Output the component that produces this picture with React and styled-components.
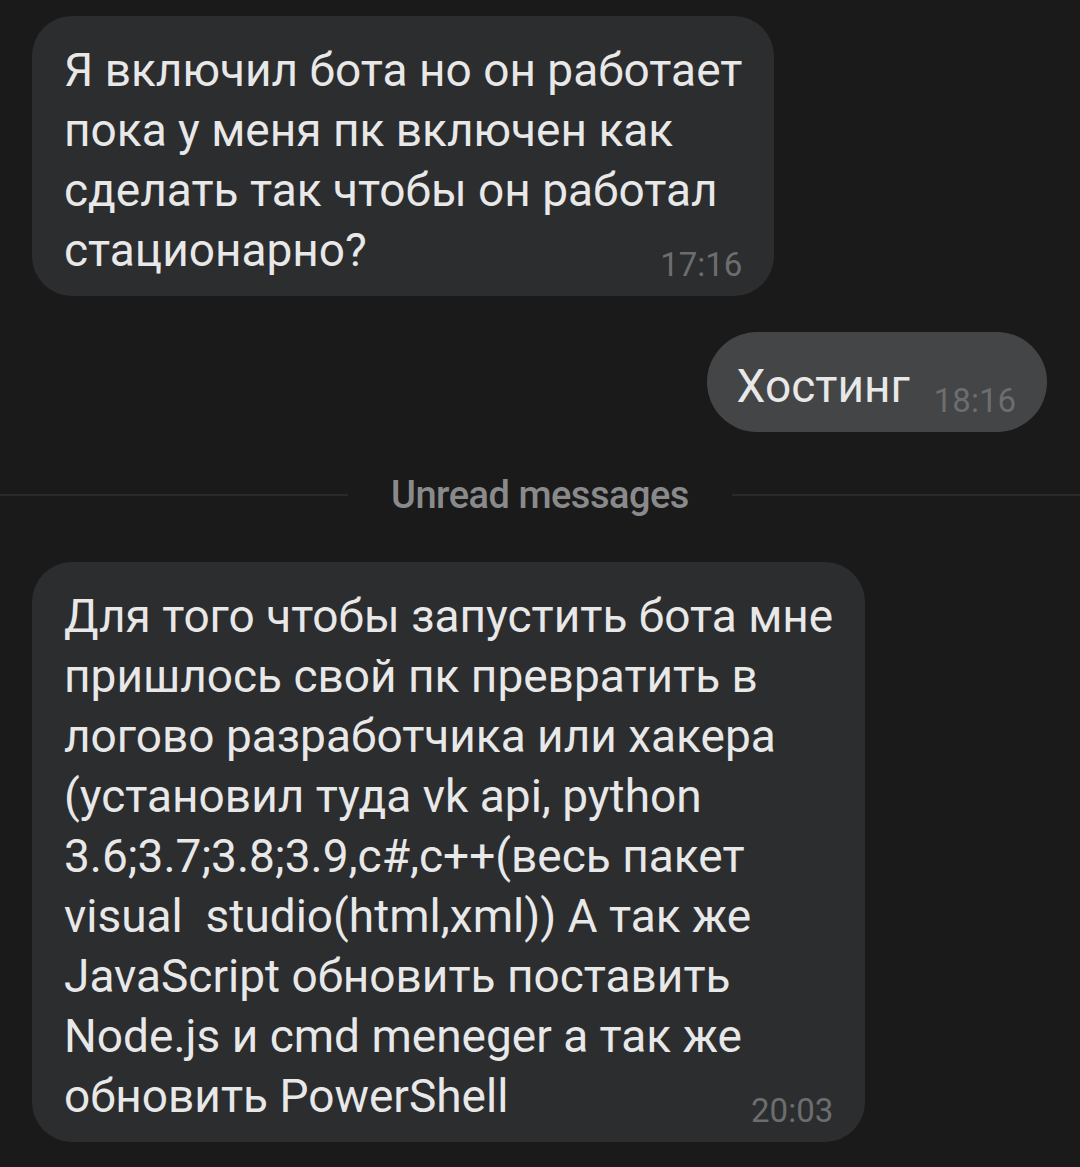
import React from 'react';
import styled, { createGlobalStyle } from 'styled-components';

const Global = createGlobalStyle`
  html, body {
    margin: 0;
    padding: 0;
    background: #1a1a1b;
  }
  body {
    font-family: Roboto, "Noto Sans", sans-serif;
  }
`;

const Page = styled.div`
  min-height: 1167px;
  padding: 16px 32px 0 32px;
  box-sizing: border-box;
  display: flex;
  flex-direction: column;
  background: #1a1a1b;
`;

const Row = styled.div`
  display: flex;
  justify-content: ${p => (p.$out ? 'flex-end' : 'flex-start')};
  margin-bottom: ${p => p.$gap || 0}px;
`;

const Bubble = styled.div`
  display: flex;
  flex-direction: column;
  padding: ${p => (p.$out ? '24px 31px 16px 30px' : '24px 32px 16px 32px')};
  margin-right: ${p => (p.$out ? '1px' : '0')};
  border-radius: ${p => (p.$out ? '50px' : '40px')};
  background: ${p => (p.$out ? '#444547' : '#2c2d2f')};
  color: #e8e8e8;
  font-size: 46px;
  line-height: 60px;
  white-space: pre;
`;

const LastLine = styled.div`
  display: flex;
  align-items: flex-end;
  gap: 24px;
`;

const Time = styled.span`
  margin-left: auto;
  font-size: 33px;
  line-height: 30px;
  color: #6c6d6f;
`;

const Divider = styled.div`
  display: flex;
  align-items: center;
  margin: 41px -32px 45px -32px;
  gap: 43px;
  color: #8a8a8b;
  font-size: 38px;
  font-weight: 500;
  letter-spacing: -0.5px;

  &::before, &::after {
    content: '';
    flex: 1;
    height: 2px;
    background: #2a2a2b;
  }
`;

function Message({ lines, time, out, gap }) {
  const head = lines.slice(0, -1);
  const last = lines[lines.length - 1];
  return (
    <Row $out={out} $gap={gap}>
      <Bubble $out={out}>
        {head.map((l, i) => <div key={i}>{l}</div>)}
        <LastLine>
          <span>{last}</span>
          <Time>{time}</Time>
        </LastLine>
      </Bubble>
    </Row>
  );
}

export default function App() {
  return (
    <Page>
      <Global />
      <Message
        gap={36}
        time="17:16"
        lines={[
          'Я включил бота но он работает',
          'пока у меня пк включен как',
          'сделать так чтобы он работал',
          'стационарно?',
        ]}
      />
      <Message out time="18:16" lines={['Хостинг']} />
      <Divider>Unread messages</Divider>
      <Message
        time="20:03"
        lines={[
          'Для того чтобы запустить бота мне',
          'пришлось свой пк превратить в',
          'логово разработчика или хакера',
          '(установил туда vk api, python',
          '3.6;3.7;3.8;3.9,c#,c++(весь пакет',
          'visual  studio(html,xml)) А так же',
          'JavaScript обновить поставить',
          'Node.js и cmd meneger а так же',
          'обновить PowerShell',
        ]}
      />
    </Page>
  );
}
